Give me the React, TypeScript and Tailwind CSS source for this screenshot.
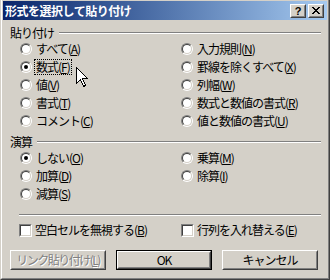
import React from "react";

function Radio({ checked }: { checked?: boolean }) {
  return (
    <span className="block w-[12px] h-[12px] shrink-0 rounded-full border border-t-[#808080] border-l-[#808080] border-b-white border-r-white">
      <span className="flex w-full h-full items-center justify-center rounded-full border border-t-[#404040] border-l-[#404040] border-b-[#D4D0C8] border-r-[#D4D0C8] bg-white">
        {checked && <span className="block w-[4px] h-[4px] rounded-full bg-black" />}
      </span>
    </span>
  );
}

function Check() {
  return (
    <span className="block w-[13px] h-[13px] shrink-0 border border-t-[#808080] border-l-[#808080] border-b-white border-r-white">
      <span className="block w-full h-full border border-t-[#404040] border-l-[#404040] border-b-[#D4D0C8] border-r-[#D4D0C8] bg-white" />
    </span>
  );
}

function Label({ text, acc, focus }: { text: string; acc: string; focus?: boolean }) {
  return (
    <span
      className={
        "whitespace-nowrap px-[1px] leading-[14px] border " +
        (focus ? "border-dotted border-black" : "border-transparent")
      }
    >
      {text}(<u>{acc}</u>)
    </span>
  );
}

function RadioRow({ text, acc, checked, focus }: { text: string; acc: string; checked?: boolean; focus?: boolean }) {
  return (
    <div className="flex h-[18px] items-center gap-[2px]">
      <Radio checked={checked} />
      <Label text={text} acc={acc} focus={focus} />
    </div>
  );
}

function GroupHeader({ title, className }: { title: string; className?: string }) {
  return (
    <div className={"flex h-[14px] items-center pl-[7px] pr-[6px] " + (className ?? "")}>
      <span className="leading-[14px]">{title}</span>
      <div className="ml-[5px] h-[2px] flex-1 border-t border-b border-t-[#808080] border-b-white" />
    </div>
  );
}

function Button({ children, isDefault, disabled }: { children: React.ReactNode; isDefault?: boolean; disabled?: boolean }) {
  const inner = (
    <div className="h-full w-full border border-t-white border-l-white border-b-[#404040] border-r-[#404040]">
      <div className="flex h-full w-full items-center justify-center border border-t-[#D4D0C8] border-l-[#D4D0C8] border-b-[#808080] border-r-[#808080]">
        <span
          className={
            "whitespace-nowrap leading-[14px] " +
            (disabled
              ? "tracking-[-1.5px] text-[#808080] [text-shadow:1px_1px_0_#ffffff]"
              : "text-black")
          }
        >
          {children}
        </span>
      </div>
    </div>
  );
  return (
    <div className={"h-[20px] w-[96px] " + (isDefault ? "border border-black" : "")}>{inner}</div>
  );
}

function CaptionButton({ children }: { children: React.ReactNode }) {
  return (
    <div className="h-[14px] w-[16px] bg-[#D4D0C8] border border-t-white border-l-white border-b-[#404040] border-r-[#404040]">
      <div className="flex h-full w-full items-center justify-center border border-transparent border-b-[#808080] border-r-[#808080]">
        {children}
      </div>
    </div>
  );
}

function CloseGlyph() {
  const px: [number, number, number][] = [
    [0, 0, 2], [6, 0, 2],
    [1, 1, 2], [5, 1, 2],
    [2, 2, 4],
    [3, 3, 2],
    [2, 4, 4],
    [1, 5, 2], [5, 5, 2],
    [0, 6, 2], [6, 6, 2],
  ];
  return (
    <svg width="8" height="7" viewBox="0 0 8 7" shapeRendering="crispEdges">
      {px.map(([x, y, w], i) => (
        <rect key={i} x={x} y={y} width={w} height={1} fill="#000" />
      ))}
    </svg>
  );
}

function Cursor() {
  return (
    <svg
      className="absolute left-[75px] top-[67px]"
      width="13"
      height="21"
      viewBox="0 0 13 21"
      shapeRendering="crispEdges"
    >
      <path
        d="M0.5 0.5 L0.5 16.5 L4.5 12.5 L7.5 19.5 L9.5 18.5 L6.5 11.5 L11.5 11.5 Z"
        fill="#ffffff"
        stroke="#000000"
        strokeWidth="1"
        strokeLinejoin="miter"
      />
    </svg>
  );
}

export default function App() {
  return (
    <div className="relative h-[280px] w-[330px] overflow-hidden bg-[#D4D0C8] border-l border-r border-b border-l-[#D4D0C8] border-r-[#404040] border-b-[#404040] font-['Noto_Sans_CJK_JP','Noto_Sans',sans-serif] text-[12px] tracking-[-1px] text-black">
      <div className="flex h-full w-full flex-col border-l border-r border-b border-l-white border-r-[#808080] border-b-[#808080] px-[1px]">
        {/* Title bar */}
        <div className="mt-[1px] flex h-[19px] items-center justify-between bg-gradient-to-r from-[#0A246A] to-[#A6CAF0] pl-[2px] pr-[3px]">
          <span className="font-bold leading-[14px] tracking-[-0.5px] text-white">形式を選択して貼り付け</span>
          <div className="flex items-center gap-[2px]">
            <CaptionButton>
              <span className="font-['Liberation_Sans',sans-serif] text-[11px] font-bold leading-[10px] tracking-normal">?</span>
            </CaptionButton>
            <CaptionButton>
              <CloseGlyph />
            </CaptionButton>
          </div>
        </div>

        {/* 貼り付け */}
        <GroupHeader title="貼り付け" className="mt-[6px]" />
        <div className="grid grid-cols-[161px_1fr] pl-[17px]">
          <div className="flex flex-col">
            <RadioRow text="すべて" acc="A" />
            <RadioRow text="数式" acc="F" checked focus />
            <RadioRow text="値" acc="V" />
            <RadioRow text="書式" acc="T" />
            <RadioRow text="コメント" acc="C" />
          </div>
          <div className="flex flex-col">
            <RadioRow text="入力規則" acc="N" />
            <RadioRow text="罫線を除くすべて" acc="X" />
            <RadioRow text="列幅" acc="W" />
            <RadioRow text="数式と数値の書式" acc="R" />
            <RadioRow text="値と数値の書式" acc="U" />
          </div>
        </div>

        {/* 演算 */}
        <GroupHeader title="演算" className="mt-[5px]" />
        <div className="grid grid-cols-[161px_1fr] pl-[17px]">
          <div className="flex flex-col">
            <RadioRow text="しない" acc="O" checked />
            <RadioRow text="加算" acc="D" />
            <RadioRow text="減算" acc="S" />
          </div>
          <div className="flex flex-col">
            <RadioRow text="乗算" acc="M" />
            <RadioRow text="除算" acc="I" />
          </div>
        </div>

        {/* separator */}
        <div className="ml-[16px] mr-[6px] mt-[11px] h-[2px] border-t border-b border-t-[#808080] border-b-white" />

        {/* checkboxes */}
        <div className="mt-[7px] grid h-[14px] grid-cols-[162px_1fr] pl-[16px]">
          <div className="flex items-center gap-[3px]">
            <Check />
            <span className="whitespace-nowrap leading-[14px]">
              空白セルを無視する(<u>B</u>)
            </span>
          </div>
          <div className="flex items-center gap-[3px]">
            <Check />
            <span className="whitespace-nowrap leading-[14px]">
              行列を入れ替える(<u>E</u>)
            </span>
          </div>
        </div>

        {/* buttons */}
        <div className="mt-[13px] flex gap-[10px] pl-[7px]">
          <Button disabled>
            リンク貼り付け(<u>L</u>)
          </Button>
          <Button isDefault>OK</Button>
          <Button>キャンセル</Button>
        </div>
      </div>
      <Cursor />
    </div>
  );
}
